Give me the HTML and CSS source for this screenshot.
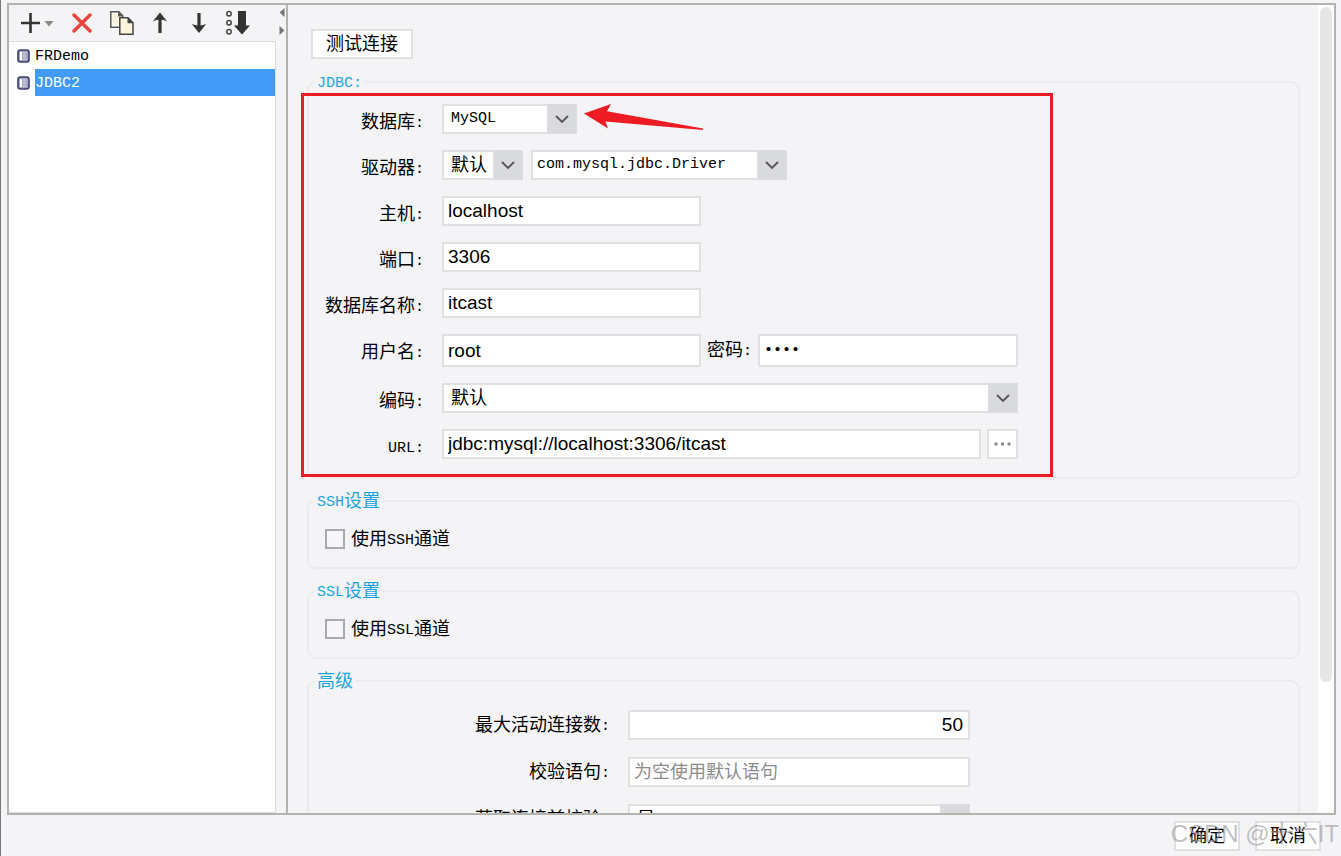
FILE: index.html
```html
<!DOCTYPE html>
<html lang="zh-CN">
<head>
    <meta charset="UTF-8">
    <meta name="viewport" content="width=device-width, initial-scale=1.0">
    <title>JDBC2</title>
    <link rel="stylesheet" href="styles.css">
</head>
<body>
    <main class="window">
        <!-- Connection list -->
        <aside class="sidebar">
            <div class="toolbar">
                <button type="button" class="tool" aria-label="添加">
                    <svg width="34" height="26" viewBox="0 0 34 26"><path d="M1 13h19M10.500 3v20" stroke="#333" stroke-width="2.600" fill="none"/><path d="M24.500 11h9l-4.500 5.500z" fill="#8a8a8a"/></svg>
                </button>
                <button type="button" class="tool" aria-label="删除">
                    <svg width="20" height="26" viewBox="0 0 20 26"><path d="M2 5l16 16M18 5L2 21" stroke="#e8443d" stroke-width="3.400" stroke-linecap="round"/></svg>
                </button>
                <button type="button" class="tool" aria-label="复制">
                    <svg width="24" height="26" viewBox="0 0 24 26"><path d="M.8 1.800h8l4 4v11.400h-12z" fill="#fff" stroke="#555" stroke-width="1.500"/><path d="M2.500 4h6v11h-6z" fill="#fdf3dc"/><path d="M8 1.500v5h5z" fill="#555"/><path d="M9.800 7.800h8.200l5 5v11.400h-13.200z" fill="#fdf3dc" stroke="#444" stroke-width="1.500"/><path d="M17.500 7.500v5.800h5.800z" fill="#444"/></svg>
                </button>
                <button type="button" class="tool" aria-label="上移">
                    <svg width="16" height="26" viewBox="0 0 16 26"><path d="M8 2.500l7.200 9q-3-1.500-5.600-1.700V23H6.400V9.800Q3.800 10 .8 11.500z" fill="#333"/></svg>
                </button>
                <button type="button" class="tool" aria-label="下移">
                    <svg width="22" height="26" viewBox="0 0 22 26"><path d="M13 23l7.200-9q-3 1.300-5.600 1.500V3h-3.200v12.500q-2.600-.2-5.600-1.500z" fill="#333"/></svg>
                </button>
                <button type="button" class="tool" aria-label="排序">
                    <svg width="24" height="26" viewBox="0 0 24 26"><g fill="none" stroke="#444" stroke-width="1.500"><circle cx="3" cy="3.800" r="2.200"/><circle cx="3" cy="12.800" r="2.200"/><circle cx="3" cy="21.800" r="2.200"/></g><path d="M12 1h8v14.500h4L16 24.500 8 15.500h4z" fill="#333"/></svg>
                </button>
            </div>
            <ul class="list">
                <li class="item">
                    <svg class="db-icon" width="13" height="14" viewBox="0 0 13 14"><rect x="1" y="1" width="11" height="12" rx="2.500" fill="#a6a7cb" stroke="#3e3f66" stroke-width="1.600"/><path d="M4 3v8" stroke="#fff" stroke-width="2"/><path d="M6 4h3M6 7h3M6 10h3" stroke="#dcdcf2" stroke-width="1.200"/></svg>
                    <span class="item-name">FRDemo</span>
                </li>
                <li class="item selected">
                    <svg class="db-icon" width="13" height="14" viewBox="0 0 13 14"><rect x="1" y="1" width="11" height="12" rx="2.500" fill="#a6a7cb" stroke="#3e3f66" stroke-width="1.600"/><path d="M4 3v8" stroke="#fff" stroke-width="2"/><path d="M6 4h3M6 7h3M6 10h3" stroke="#dcdcf2" stroke-width="1.200"/></svg>
                    <span class="item-name">JDBC2</span>
                </li>
            </ul>
        </aside>

        <div class="splitter">
            <svg width="6" height="28" viewBox="0 0 6 28"><path d="M5.500 0v9L.5 4.500zM.5 18v9l5-4.500z" fill="#777"/></svg>
        </div>

        <!-- Settings -->
        <section class="content">
            <form class="settings">
                <button type="button" class="btn test-btn">测试连接</button>

                <fieldset class="group">
                    <legend><span class="latin">JDBC:</span></legend>
                    <div class="form jdbc-form">
                        <label for="database">数据库<span class="latin">:</span></label>
                        <div class="row">
                            <div class="select select-db">
                                <select id="database" class="latin"><option>MySQL</option></select>
                                <span class="chevron"><svg width="14" height="9" viewBox="0 0 14 9"><path d="M1 1l6 6 6-6" fill="none" stroke="#555" stroke-width="1.800"/></svg></span>
                            </div>
                        </div>

                        <label for="driver">驱动器<span class="latin">:</span></label>
                        <div class="row driver-row">
                            <div class="select select-mode">
                                <select id="driver"><option>默认</option></select>
                                <span class="chevron"><svg width="14" height="9" viewBox="0 0 14 9"><path d="M1 1l6 6 6-6" fill="none" stroke="#555" stroke-width="1.800"/></svg></span>
                            </div>
                            <div class="select select-driver">
                                <select class="latin" aria-label="驱动器"><option>com.mysql.jdbc.Driver</option></select>
                                <span class="chevron"><svg width="14" height="9" viewBox="0 0 14 9"><path d="M1 1l6 6 6-6" fill="none" stroke="#555" stroke-width="1.800"/></svg></span>
                            </div>
                        </div>

                        <label for="host">主机<span class="latin">:</span></label>
                        <div class="row"><input type="text" id="host" class="short" value="localhost"></div>

                        <label for="port">端口<span class="latin">:</span></label>
                        <div class="row"><input type="text" id="port" class="short" value="3306"></div>

                        <label for="dbname">数据库名称<span class="latin">:</span></label>
                        <div class="row"><input type="text" id="dbname" class="short" value="itcast"></div>

                        <label for="user">用户名<span class="latin">:</span></label>
                        <div class="row user-row">
                            <input type="text" id="user" class="short" value="root">
                            <label for="password">密码<span class="latin">:</span></label>
                            <input type="password" id="password" class="password" value="root">
                        </div>

                        <label for="encoding">编码<span class="latin">:</span></label>
                        <div class="row">
                            <div class="select">
                                <select id="encoding"><option>默认</option></select>
                                <span class="chevron"><svg width="14" height="9" viewBox="0 0 14 9"><path d="M1 1l6 6 6-6" fill="none" stroke="#555" stroke-width="1.800"/></svg></span>
                            </div>
                        </div>

                        <label for="url"><span class="latin">URL:</span></label>
                        <div class="row">
                            <input type="text" id="url" value="jdbc:mysql://localhost:3306/itcast">
                            <button type="button" class="btn more-btn" aria-label="更多">
                                <svg width="17" height="4" viewBox="0 0 17 4"><path d="M.5.500h3v3h-3zM7 .5h3v3H7zM13.500.500h3v3h-3z" fill="#8a8a8a"/></svg>
                            </button>
                        </div>

                        <!-- Red frame and arrow over the form -->
                        <div class="mark-box"></div>
                        <svg class="mark-arrow" width="120" height="26" viewBox="0 0 120 26"><path d="M0 9.500L27 0l-4 7.200 96 17.300v1.500L21.500 17.500 24 24.500z" fill="#ed1c24"/></svg>
                    </div>
                </fieldset>

                <fieldset class="group">
                    <legend><span class="latin">SSH</span>设置</legend>
                    <div class="check">
                        <input type="checkbox" id="ssh">
                        <label for="ssh">使用<span class="latin">SSH</span>通道</label>
                    </div>
                </fieldset>

                <fieldset class="group">
                    <legend><span class="latin">SSL</span>设置</legend>
                    <div class="check">
                        <input type="checkbox" id="ssl">
                        <label for="ssl">使用<span class="latin">SSL</span>通道</label>
                    </div>
                </fieldset>

                <fieldset class="group">
                    <legend>高级</legend>
                    <div class="form advanced-form">
                        <label for="max">最大活动连接数<span class="latin">:</span></label>
                        <div class="row"><input type="text" id="max" class="number" value="50"></div>

                        <label for="check-sql">校验语句<span class="latin">:</span></label>
                        <div class="row"><input type="text" id="check-sql" placeholder="为空使用默认语句"></div>

                        <label for="check-get">获取连接前校验<span class="latin">:</span></label>
                        <div class="row">
                            <div class="select">
                                <select id="check-get"><option>是</option></select>
                                <span class="chevron"><svg width="14" height="9" viewBox="0 0 14 9"><path d="M1 1l6 6 6-6" fill="none" stroke="#555" stroke-width="1.800"/></svg></span>
                            </div>
                        </div>
                    </div>
                </fieldset>
            </form>
            <div class="scrollbar"><div class="thumb"></div></div>
        </section>
    </main>

    <footer class="footer">
        <button type="button" class="btn">确定</button>
        <button type="button" class="btn">取消</button>
        <div class="watermark">CSDN @十六IT</div>
    </footer>
</body>
</html>
```

FILE: styles.css
```css
* {
    margin: 0;
    padding: 0;
    box-sizing: border-box;
}

body {
    height: 100vh;
    display: flex;
    flex-direction: column;
    padding: 3px 5px 0 6px;
    border-left: 1px solid #77777c;
    background-color: #f4f4f7;
    color: #000;
    font-family: "Liberation Sans", "Noto Sans CJK SC", sans-serif;
    font-size: 18px;
    line-height: 24px;
    overflow: hidden;
}

input,
select,
button {
    font: inherit;
    color: inherit;
}

.latin {
    font-family: "Liberation Mono", monospace;
    font-size: 15px;
    line-height: 16px;
    vertical-align: 1px;
}

.window {
    flex: 1;
    min-height: 0;
    display: flex;
    border: 2px solid #b3b3ad;
}

/* Left list */
.sidebar {
    width: 267px;
    display: flex;
    flex-direction: column;
}

.toolbar {
    display: flex;
    align-items: center;
    gap: 18px;
    height: 36px;
    padding-left: 11px;
}

.tool {
    display: flex;
    border: none;
    background: none;
}

.list {
    flex: 1;
    list-style: none;
    background-color: #fff;
    border: solid #dcdcdf;
    border-width: 1px 1px 1px 0;
}

.item {
    display: flex;
    align-items: center;
    gap: 5px;
    height: 27px;
    padding-left: 8px;
}

.item-name {
    flex: 1;
    padding-top: 2px;
    line-height: 25px;
    font-family: "Liberation Mono", monospace;
    font-size: 15px;
}

.selected .item-name {
    background-color: #429af9;
    color: #fff;
}

.splitter {
    width: 12px;
    padding: 3px 0 0 3px;
    border-right: 2px solid #b3b3ad;
}

/* Right side */
.content {
    flex: 1;
    min-width: 0;
    display: flex;
    overflow: hidden;
}

.settings {
    flex: 1;
    min-width: 0;
    padding: 24px 18px 0 19px;
}

.scrollbar {
    width: 16px;
    padding: 2px;
    background-color: #fff;
}

.thumb {
    height: 84%;
    border-radius: 6px;
    background-color: #e6e6e6;
}

.btn {
    height: 30px;
    border: 2px solid #e0e0e3;
    background-color: #fff;
}

.test-btn {
    display: block;
    margin: 0 0 11px 4px;
    padding: 0 13px;
}

.group {
    min-width: 0;
    margin-bottom: 10px;
    padding: 0 5px;
    border: 2px solid #ebebed;
    border-radius: 9px;
}

.group legend {
    height: 24px;
    padding: 0 3px;
    color: #1ea5e0;
}

.form {
    display: grid;
    align-items: start;
    row-gap: 16px;
}

.form label {
    height: 30px;
    text-align: right;
    white-space: nowrap;
}

.jdbc-form {
    position: relative;
    width: 704px;
    grid-template-columns: 110px 1fr;
    column-gap: 18px;
    padding: 10px 0 18px;
}

.jdbc-form > label {
    padding-top: 6px;
}

.advanced-form {
    width: 656px;
    grid-template-columns: 296px 1fr;
    column-gap: 18px;
    row-gap: 17px;
    padding: 17px 0 18px;
}

.advanced-form label {
    line-height: 30px;
}

.row {
    display: flex;
    gap: 6px;
    height: 30px;
}

.driver-row {
    gap: 8px;
}

.user-row {
    height: 33px;
}

.user-row label {
    line-height: 33px;
}

.row input {
    flex: 1;
    min-width: 0;
    padding: 0 5px 0 4px;
    border: 2px solid #e0e0e3;
    background-color: #fff;
    font-size: 19px;
}

.row .short {
    flex: none;
    width: 259px;
}

.row .number {
    text-align: right;
}

.row .password {
    font-family: "Liberation Mono", monospace;
    font-size: 15px;
}

.row input::placeholder {
    color: #8c8c8c;
    font-size: 18px;
}

.select {
    flex: 1;
    display: flex;
    height: 30px;
    border: 2px solid #e0e0e3;
    background-color: #fff;
}

.select-db {
    flex: none;
    width: 135px;
}

.select-mode {
    flex: none;
    width: 81px;
}

.select-driver {
    flex: none;
    width: 256px;
}

.select select {
    flex: 1;
    min-width: 0;
    padding-left: 7px;
    border: none;
    background: none;
    appearance: none;
}

.select-driver select {
    padding-left: 4px;
}

.chevron {
    display: flex;
    align-items: center;
    justify-content: center;
    width: 30px;
    margin: -2px -2px -2px 0;
    border: 1px solid #dddde1;
    background-color: #d9dade;
}

.more-btn {
    display: flex;
    align-items: center;
    justify-content: center;
    width: 31px;
}

.mark-box {
    position: absolute;
    top: -1px;
    right: -35px;
    bottom: 0;
    left: -13px;
    border: 3px solid #ed1c24;
    pointer-events: none;
}

.mark-arrow {
    position: absolute;
    top: 10px;
    left: 270px;
    pointer-events: none;
}

.check {
    display: flex;
    align-items: center;
    gap: 6px;
    padding: 14px 0 16px 11px;
}

.check input {
    width: 20px;
    height: 20px;
    border: 2px solid #a9a9ab;
    background-color: #f7f7f9;
    appearance: none;
}

.check input:checked {
    background-color: #429af9;
}

/* Bottom buttons */
.footer {
    position: relative;
    display: flex;
    justify-content: flex-end;
    gap: 15px;
    height: 41px;
    padding: 6px 15px 0 0;
}

.footer .btn {
    width: 66px;
}

.watermark {
    position: absolute;
    right: -3px;
    bottom: 8px;
    color: rgba(150, 150, 155, 0.6);
    font-size: 24px;
    line-height: 28px;
    white-space: nowrap;
    pointer-events: none;
}
```
